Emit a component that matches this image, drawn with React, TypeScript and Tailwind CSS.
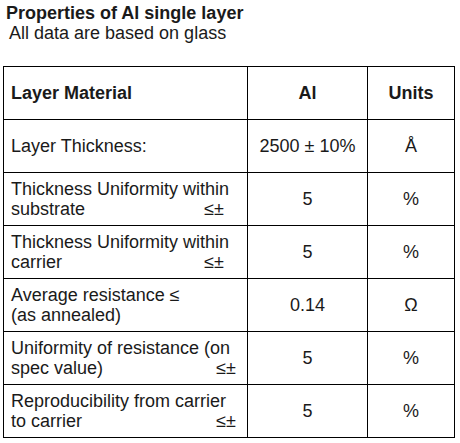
export default function App() {
  const rows = [
    { a: "Layer Thickness:", b: "2500 ± 10%", c: "Å" },
    { a: "Thickness Uniformity within", a2: "substrate", pad: "pr-[23px]", b: "5", c: "%" },
    { a: "Thickness Uniformity within", a2: "carrier", pad: "pr-[23px]", b: "5", c: "%" },
    { a: "Average resistance ≤", a2: "(as annealed)", b: "0.14", c: "Ω" },
    { a: "Uniformity of resistance (on", a2: "spec value)", pad: "pr-[11px]", b: "5", c: "%" },
    { a: "Reproducibility from carrier", a2: "to carrier", pad: "pr-[11px]", b: "5", c: "%" },
  ];

  return (
    <div className="w-[460px] h-[443px] bg-white text-[#1a1a1a] font-['Liberation_Sans',Arial,sans-serif] overflow-hidden">
      <div className="pl-[6px] pt-[3px]">
        <div className="text-[18px] font-bold leading-[20px]">Properties of Al single layer</div>
        <div className="pl-[3px] text-[18px] leading-[20px]">All data are based on glass</div>
      </div>
      <table className="ml-[3px] mt-[23px] w-[451px] border-collapse table-fixed text-[18px] leading-[20px]">
        <colgroup>
          <col className="w-[244px]" />
          <col className="w-[120px]" />
          <col className="w-[87px]" />
        </colgroup>
        <tbody>
          <tr className="h-[53px]">
            <td className="border border-black pl-[7px] font-bold">Layer Material</td>
            <td className="border border-black text-center font-bold">Al</td>
            <td className="border border-black text-center font-bold">Units</td>
          </tr>
          {rows.map((r, i) => (
            <tr key={i} className="h-[53px]">
              <td className="border border-black pl-[7px] pr-0 align-middle">
                <div>{r.a}</div>
                {r.a2 && (
                  <div className={`flex justify-between ${r.pad ?? ""}`}>
                    <span>{r.a2}</span>
                    {r.pad && <span>≤±</span>}
                  </div>
                )}
              </td>
              <td className="border border-black text-center">{r.b}</td>
              <td className="border border-black text-center">{r.c}</td>
            </tr>
          ))}
        </tbody>
      </table>
    </div>
  );
}
